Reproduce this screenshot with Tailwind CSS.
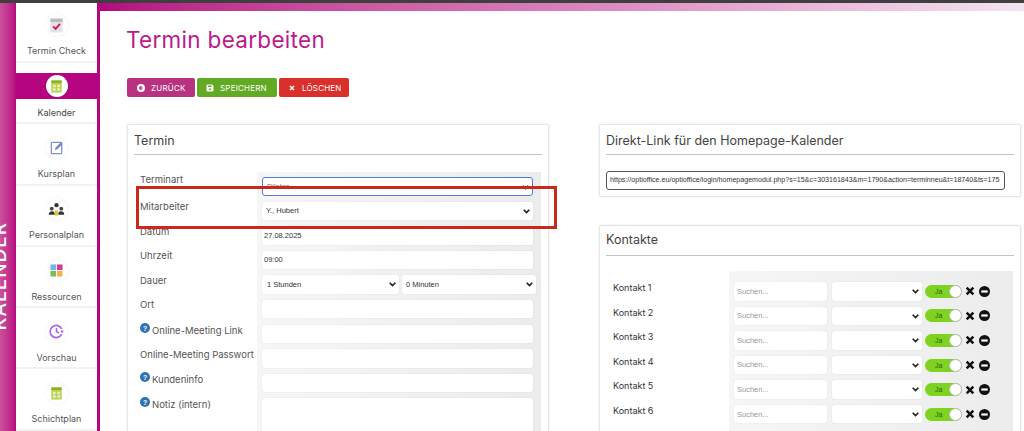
<!DOCTYPE html>
<html lang="de">
<head>
<meta charset="UTF-8">
<title>Termin bearbeiten</title>
<script src="https://cdn.jsdelivr.net/npm/@tailwindcss/browser@4"></script>
</head>
<body class="bg-white">
<div class="relative w-[1024px] h-[431px] overflow-hidden font-['Inter',sans-serif] text-[#444]">
  <div class="h-[3px] bg-[#3f3f3f]"></div>
  <div class="flex h-[428px]">
    <!-- sidebar -->
    <div class="w-[16px] h-full overflow-hidden bg-gradient-to-r from-[#cc4f9e] to-[#b5057f] flex flex-col items-start">
      <div class="h-[219px] shrink-0"></div>
      <div class="-ml-[8px] [writing-mode:vertical-rl] rotate-180 text-white text-[19px] leading-[16px] tracking-[1px] font-medium whitespace-nowrap">KALENDER</div>
    </div>
    <div id="nav" class="w-[81px] h-full bg-white flex flex-col"></div>
    <div class="w-[3px] h-full bg-[#b5057f]"></div>
    <!-- main -->
    <div class="flex-1 flex flex-col">
      <div class="h-[8px] shrink-0 bg-gradient-to-r from-[#b5057f] via-[#d980bd] to-[#f3e4f1]"></div>
      <div class="pl-[26px] pt-[14px]">
        <h1 class="text-[#bb1a8c] text-[22.5px] leading-[30px] tracking-[0.3px] font-normal">Termin bearbeiten</h1>
        <div class="flex mt-[23px] ml-px gap-[2px] text-white text-[8px] tracking-[0.2px]">
          <div class="w-[68px] h-[19px] rounded-[2px] bg-[#b8327f] flex items-center pl-[10px] gap-[6px]">
            <svg class="w-[8px] h-[8px]" viewBox="0 0 16 16"><circle cx="8" cy="8" r="8" fill="#fff"/><path d="M9 4 5 8l4 4M5 8h7" stroke="#b8327f" stroke-width="2.4" fill="none"/></svg>ZURÜCK
          </div>
          <div class="w-[80px] h-[19px] rounded-[2px] bg-[#62a924] flex items-center pl-[9px] gap-[6px]">
            <svg class="w-[8px] h-[8px]" viewBox="0 0 16 16"><path d="M1 3a2 2 0 0 1 2-2h9l3 3v9a2 2 0 0 1-2 2H3a2 2 0 0 1-2-2Z" fill="#fff"/><rect x="4" y="3" width="7" height="3" fill="#62a924"/><circle cx="8" cy="10.500" r="2" fill="#62a924"/></svg>SPEICHERN
          </div>
          <div class="w-[70px] h-[19px] rounded-[2px] bg-[#d9302c] flex items-center pl-[10px] gap-[7px]">
            <svg class="w-[6px] h-[6px]" viewBox="0 0 12 12"><path d="M2 2l8 8M10 2l-8 8" stroke="#fff" stroke-width="3"/></svg>LÖSCHEN
          </div>
        </div>
        <div class="flex mt-[27px] ml-px items-start">
          <!-- left panel -->
          <div class="w-[422px] h-[320px] rounded-[2px] border border-[#e6e6e6] shadow-[0_0_3px_rgba(0,0,0,0.08)] px-[6px]">
            <div class="h-[29.500px] border-b border-[#c4c4c4] pt-[7px] text-[12.500px] leading-[17px] text-[#444]">Termin</div>
            <div class="grid grid-cols-[123px_1fr] mt-[17.500px] h-[280px]">
              <div id="formLabels" class="pl-[6px] mt-px text-[9.500px]"></div>
              <div id="formFields" class="bg-gradient-to-r from-[#f6f6f6] to-[#ececec] w-[284px] pl-[5px] pt-[5px]"></div>
            </div>
          </div>
          <!-- right col -->
          <div class="ml-[50px] w-[422px]">
            <div class="h-[73px] rounded-[2px] border border-[#e6e6e6] shadow-[0_0_3px_rgba(0,0,0,0.08)] px-[6px]">
              <div class="h-[29.500px] border-b border-[#c4c4c4] pt-[7px] text-[12.500px] leading-[17px] text-[#444]">Direkt-Link für den Homepage-Kalender</div>
              <div class="mt-[16.500px] w-[399px] h-[19px] rounded-[3px] border border-[#555] bg-white flex items-center pl-[3px] pr-[3px] overflow-hidden font-['Liberation_Sans',sans-serif] text-[7.100px] text-[#333] whitespace-nowrap">https://optioffice.eu/optioffice/login/homepagemodul.php?s=15&amp;c=303161843&amp;m=1790&amp;action=terminneu&amp;t=18740&amp;ts=175</div>
            </div>
            <div class="mt-[28px] h-[220px] rounded-[2px] border border-[#e6e6e6] shadow-[0_0_3px_rgba(0,0,0,0.08)] px-[6px]">
              <div class="h-[29.500px] border-b border-[#c4c4c4] pt-[5px] text-[12.500px] leading-[17px] text-[#444]">Kontakte</div>
              <div class="grid grid-cols-[123px_284px] mt-[15.500px]">
                <div id="contactLabels" class="pl-[7px] pt-[11px] text-[9px] text-[#333]"></div>
                <div id="contactRows" class="bg-gradient-to-r from-[#f6f6f6] to-[#ececec] h-[170px] pl-[5px] pt-[11px]"></div>
              </div>
            </div>
          </div>
        </div>
      </div>
    </div>
  </div>
  <!-- red annotation -->
  <div class="absolute left-[136px] top-[186px] w-[421px] h-[43px] border-[3px] border-[#c9281b]"></div>
</div>
<script>
const icons = {
  check: `<rect x="4" y="3" width="14" height="16" rx="1" fill="#e4e4e4"/><rect x="4" y="3" width="14" height="4" fill="#bcbcbc"/><path d="M7 12l3 3 5-6" stroke="#d21c4a" stroke-width="2.200" fill="none"/>`,
  cal: `<rect x="5" y="4" width="12" height="14" fill="#b9d24f"/><rect x="5" y="4" width="12" height="3" fill="#8fae2b"/><path d="M7 9h3v3H7zM12 9h3v3h-3zM7 13h3v3H7zM12 13h3v3h-3z" fill="#e9f1c4"/>`,
  edit: `<rect x="5" y="5" width="12" height="13" rx="1" fill="none" stroke="#8093d8" stroke-width="1.500"/><path d="M9 14l1-3 6-6 2 2-6 6z" fill="#7186d2"/>`,
  team: `<circle cx="11" cy="6" r="2.500" fill="#333"/><circle cx="5.500" cy="10" r="2.200" fill="#444"/><circle cx="16.500" cy="10" r="2.200" fill="#444"/><path d="M2 17c0-3 2-4 4-4s3 1 3 4zM13 17c0-3 1-4 3-4s4 1 4 4z" fill="#333"/><rect x="9" y="12" width="4" height="6" fill="#d8c83c"/>`,
  res: `<rect x="4" y="4" width="6.500" height="6.500" fill="#6fb6e8"/><rect x="11.500" y="4" width="6.500" height="6.500" fill="#cf3c94"/><rect x="4" y="11.500" width="6.500" height="6.500" fill="#7dbb5f"/><rect x="11.500" y="11.500" width="6.500" height="6.500" fill="#f0b552"/>`,
  clock: `<path d="M17 14a7 7 0 1 1 0-6" fill="none" stroke="#a866f0" stroke-width="2"/><path d="M11 7v4l3 2" stroke="#a866f0" stroke-width="1.800" fill="none"/><circle cx="17.500" cy="11" r="1.500" fill="#a866f0"/>`
};
const nav = [
  ["Termin Check", icons.check],
  ["Kalender", icons.cal, true],
  ["Kursplan", icons.edit],
  ["Personalplan", icons.team],
  ["Ressourcen", icons.res],
  ["Vorschau", icons.clock],
  ["Schichtplan", icons.cal]
];
document.getElementById("nav").innerHTML = nav.map((n, i) => {
  const iconEl = `<div class="w-[22px] h-[22px] rounded-full bg-white shadow-[0_0_2px_rgba(0,0,0,0.1)] flex items-center justify-center"><svg class="w-[19px] h-[19px]" viewBox="0 0 22 22">${n[1]}</svg></div>`;
  const sep = `<div class="h-[2px] shrink-0 bg-[#f2f2f2]"></div>`;
  if (n[2]) {
    return `<div class="h-[59.300px] shrink-0 flex flex-col items-center">
      <div class="w-full h-[26px] mt-[10px] bg-[#b5057f] flex items-center justify-center">${iconEl}</div>
      <div class="text-[9px] leading-[12px] mt-[8px] text-[#444]">${n[0]}</div>
    </div>${sep}`;
  }
  return `<div class="${i == 0 ? "h-[58px]" : "h-[59.300px]"} shrink-0 flex flex-col items-center">
    <div class="${i == 0 ? "mt-[11px]" : "mt-[12.700px]"}">${iconEl}</div>
    <div class="text-[9px] leading-[12px] mt-[9px] text-[#555]">${n[0]}</div>
  </div>${sep}`;
}).join("");

const chevron = `<svg class="absolute right-[3px] top-[7px] w-[7px] h-[5px]" viewBox="0 0 10 7"><path d="M1 1l4 4 4-4" stroke="#222" stroke-width="2.400" fill="none"/></svg>`;
const help = `<svg class="inline-block w-[10px] h-[10px] align-[1px] mr-[2px]" viewBox="0 0 16 16"><circle cx="8" cy="8" r="8" fill="#2f73b5"/><text x="8" y="12" text-anchor="middle" font-size="11" font-weight="700" fill="#fff" font-family="Liberation Sans">?</text></svg>`;

const labels = [["Terminart"], ["Mitarbeiter"], ["Datum"], ["Uhrzeit"], ["Dauer"], ["Ort"], ["Online-Meeting Link", 1], ["Online-Meeting Passwort"], ["Kundeninfo", 1], ["Notiz (intern)", 1]];
document.getElementById("formLabels").innerHTML = labels.map((l, i) =>
  `<div class="${i == 0 ? "h-[27px]" : "h-[24.6px]"} leading-[14px] whitespace-nowrap text-[#555]">${l[1] ? help : ""}${l[0]}</div>`
).join("");

const field = "relative h-[18.500px] rounded-[2px] bg-white shadow-[0_0_1px_rgba(0,0,0,0.2)] flex items-center font-['Liberation_Sans',sans-serif] text-[7.500px] text-[#333]";
const box = field + " w-[271px] mb-[6.100px]";
document.getElementById("formFields").innerHTML = `
  <div class="${box} pl-[4px] !rounded-[3px] !shadow-none border-[1.5px] border-[#4f7be0] text-[#777]">Pilates${chevron}</div>
  <div class="${box} pl-[4px]">Y., Hubert${chevron}</div>
  <div class="${box} pl-[2px]">27.08.2025</div>
  <div class="${box} pl-[2px]">09:00</div>
  <div class="flex gap-[3px] mb-[6.100px]">
    <div class="${field} w-[137px] pl-[5px]">1 Stunden${chevron}</div>
    <div class="${field} w-[134px] pl-[4px]">0 Minuten${chevron}</div>
  </div>
  <div class="${box}"></div>
  <div class="${box}"></div>
  <div class="${box}"></div>
  <div class="${box}"></div>
  <div class="${box} !h-[60px]"></div>`;

const rows = [1, 2, 3, 4, 5, 6];
document.getElementById("contactLabels").innerHTML = rows.map(n =>
  `<div class="h-[24.6px] leading-[12px]">Kontakt ${n}</div>`
).join("");
document.getElementById("contactRows").innerHTML = rows.map(() => `
  <div class="flex items-center h-[18.500px] mb-[6.100px]">
    <div class="w-[93px] h-full rounded-[2px] bg-white shadow-[0_0_1px_rgba(0,0,0,0.2)] flex items-center pl-[3px] font-['Liberation_Sans',sans-serif] text-[7.500px] text-[#999]">Suchen...</div>
    <div class="relative ml-[5px] w-[90px] h-full rounded-[2px] bg-white shadow-[0_0_1px_rgba(0,0,0,0.2)]">${chevron}</div>
    <div class="relative ml-[3px] w-[37px] h-[13px] rounded-full bg-[#7ed321] font-['Liberation_Sans',sans-serif] text-[7px] leading-[13px] pl-[10px] text-[#3a5a10]">Ja<div class="absolute right-0 top-0 w-[13px] h-[13px] rounded-full bg-white border border-[#bbb]"></div></div>
    <svg class="ml-[2.500px] w-[10px] h-[10px]" viewBox="0 0 12 12"><path d="M2 2l8 8M10 2l-8 8" stroke="#111" stroke-width="3"/></svg>
    <svg class="ml-[4.500px] w-[11px] h-[11px]" viewBox="0 0 12 12"><circle cx="6" cy="6" r="6" fill="#111"/><rect x="2.500" y="4.800" width="7" height="2.400" fill="#fff"/></svg>
  </div>`).join("");
</script>
</body>
</html>
